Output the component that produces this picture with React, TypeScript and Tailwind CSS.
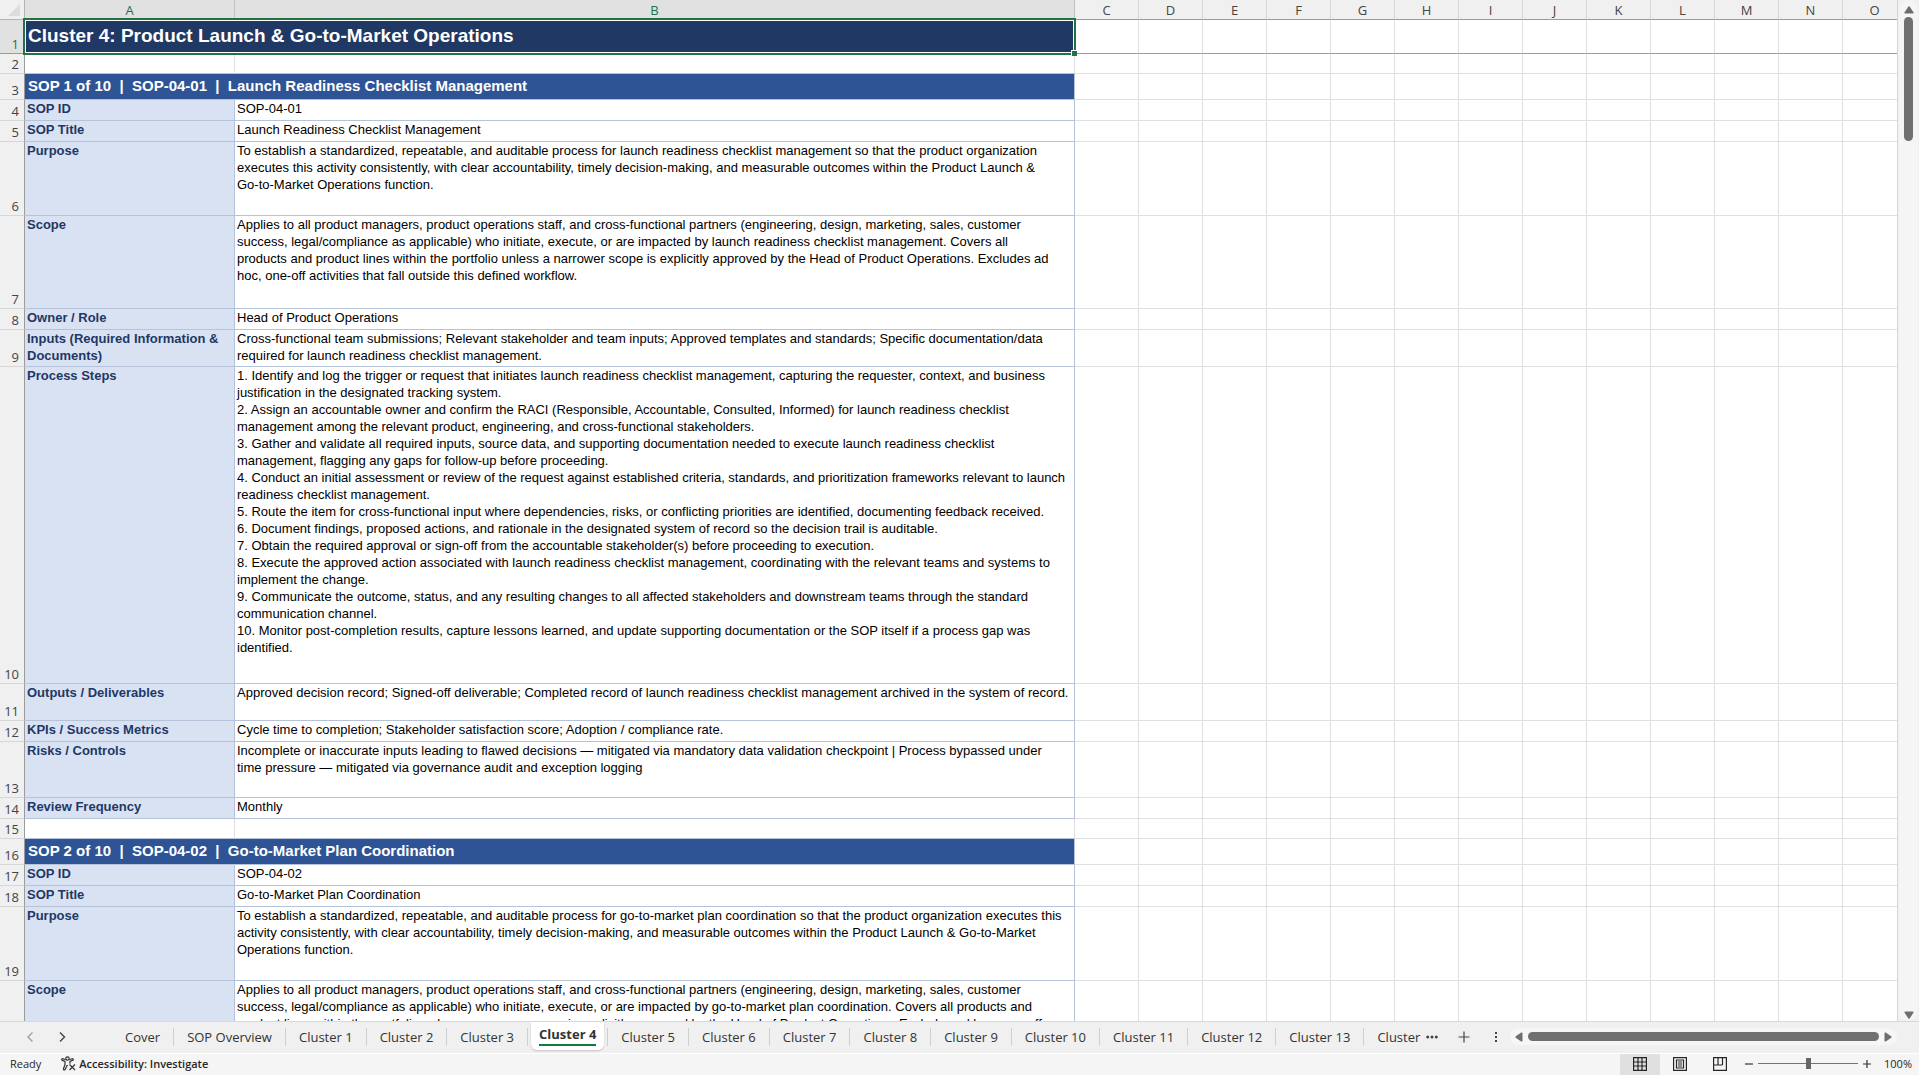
import React, { useState } from 'react';
import clsx from 'clsx';

type Row = { h: string; kind: 'title' | 'blank' | 'section' | 'field'; label?: string; lines?: string[] };

const rows: Row[] = [
  { h: 'h-[34px]', kind: 'title', label: 'Cluster 4: Product Launch & Go-to-Market Operations' },
  { h: 'h-5', kind: 'blank' },
  { h: 'h-[26px]', kind: 'section', label: 'SOP 1 of 10  |  SOP-04-01  |  Launch Readiness Checklist Management' },
  { h: 'h-[21px]', kind: 'field', label: 'SOP ID', lines: ['SOP-04-01'] },
  { h: 'h-[21px]', kind: 'field', label: 'SOP Title', lines: ['Launch Readiness Checklist Management'] },
  {
    h: 'h-[74px]',
    kind: 'field',
    label: 'Purpose',
    lines: [
      'To establish a standardized, repeatable, and auditable process for launch readiness checklist management so that the product organization',
      'executes this activity consistently, with clear accountability, timely decision-making, and measurable outcomes within the Product Launch &',
      'Go-to-Market Operations function.',
    ],
  },
  {
    h: 'h-[93px]',
    kind: 'field',
    label: 'Scope',
    lines: [
      'Applies to all product managers, product operations staff, and cross-functional partners (engineering, design, marketing, sales, customer',
      'success, legal/compliance as applicable) who initiate, execute, or are impacted by launch readiness checklist management. Covers all',
      'products and product lines within the portfolio unless a narrower scope is explicitly approved by the Head of Product Operations. Excludes ad',
      'hoc, one-off activities that fall outside this defined workflow.',
    ],
  },
  { h: 'h-[21px]', kind: 'field', label: 'Owner / Role', lines: ['Head of Product Operations'] },
  {
    h: 'h-[37px]',
    kind: 'field',
    label: 'Inputs (Required Information &\nDocuments)',
    lines: [
      'Cross-functional team submissions; Relevant stakeholder and team inputs; Approved templates and standards; Specific documentation/data',
      'required for launch readiness checklist management.',
    ],
  },
  {
    h: 'h-[317px]',
    kind: 'field',
    label: 'Process Steps',
    lines: [
      '1. Identify and log the trigger or request that initiates launch readiness checklist management, capturing the requester, context, and business',
      'justification in the designated tracking system.',
      '2. Assign an accountable owner and confirm the RACI (Responsible, Accountable, Consulted, Informed) for launch readiness checklist',
      'management among the relevant product, engineering, and cross-functional stakeholders.',
      '3. Gather and validate all required inputs, source data, and supporting documentation needed to execute launch readiness checklist',
      'management, flagging any gaps for follow-up before proceeding.',
      '4. Conduct an initial assessment or review of the request against established criteria, standards, and prioritization frameworks relevant to launch',
      'readiness checklist management.',
      '5. Route the item for cross-functional input where dependencies, risks, or conflicting priorities are identified, documenting feedback received.',
      '6. Document findings, proposed actions, and rationale in the designated system of record so the decision trail is auditable.',
      '7. Obtain the required approval or sign-off from the accountable stakeholder(s) before proceeding to execution.',
      '8. Execute the approved action associated with launch readiness checklist management, coordinating with the relevant teams and systems to',
      'implement the change.',
      '9. Communicate the outcome, status, and any resulting changes to all affected stakeholders and downstream teams through the standard',
      'communication channel.',
      '10. Monitor post-completion results, capture lessons learned, and update supporting documentation or the SOP itself if a process gap was',
      'identified.',
    ],
  },
  {
    h: 'h-[37px]',
    kind: 'field',
    label: 'Outputs / Deliverables',
    lines: ['Approved decision record; Signed-off deliverable; Completed record of launch readiness checklist management archived in the system of record.'],
  },
  {
    h: 'h-[21px]',
    kind: 'field',
    label: 'KPIs / Success Metrics',
    lines: ['Cycle time to completion; Stakeholder satisfaction score; Adoption / compliance rate.'],
  },
  {
    h: 'h-[56px]',
    kind: 'field',
    label: 'Risks / Controls',
    lines: [
      'Incomplete or inaccurate inputs leading to flawed decisions — mitigated via mandatory data validation checkpoint | Process bypassed under',
      'time pressure — mitigated via governance audit and exception logging',
    ],
  },
  { h: 'h-[21px]', kind: 'field', label: 'Review Frequency', lines: ['Monthly'] },
  { h: 'h-5', kind: 'blank' },
  { h: 'h-[26px]', kind: 'section', label: 'SOP 2 of 10  |  SOP-04-02  |  Go-to-Market Plan Coordination' },
  { h: 'h-[21px]', kind: 'field', label: 'SOP ID', lines: ['SOP-04-02'] },
  { h: 'h-[21px]', kind: 'field', label: 'SOP Title', lines: ['Go-to-Market Plan Coordination'] },
  {
    h: 'h-[74px]',
    kind: 'field',
    label: 'Purpose',
    lines: [
      'To establish a standardized, repeatable, and auditable process for go-to-market plan coordination so that the product organization executes this',
      'activity consistently, with clear accountability, timely decision-making, and measurable outcomes within the Product Launch & Go-to-Market',
      'Operations function.',
    ],
  },
  {
    h: 'h-[60px]',
    kind: 'field',
    label: 'Scope',
    lines: [
      'Applies to all product managers, product operations staff, and cross-functional partners (engineering, design, marketing, sales, customer',
      'success, legal/compliance as applicable) who initiate, execute, or are impacted by go-to-market plan coordination. Covers all products and',
      'product lines within the portfolio unless a narrower scope is explicitly approved by the Head of Product Operations. Excludes ad hoc, one-off',
    ],
  },
];

const emptyCols = 'CDEFGHIJKLMNO'.split('');

const tabs = [
  'Cover', 'SOP Overview', 'Cluster 1', 'Cluster 2', 'Cluster 3', 'Cluster 4', 'Cluster 5', 'Cluster 6',
  'Cluster 7', 'Cluster 8', 'Cluster 9', 'Cluster 10', 'Cluster 11', 'Cluster 12', 'Cluster 13', 'Cluster',
];

const SheetRow = ({ row, index }: { row: Row; index: number }) => {
  const first = index === 0;
  const last = index === rows.length - 1;
  const beforeSection = rows[index + 1]?.kind === 'section';
  const blankBorder = beforeSection ? 'border-b-[#b4c3da]' : 'border-b-[#e0e0e0]';
  return (
    <tr className={row.h}>
      <th
        scope="row"
        className={clsx(
          'border-r border-b border-r-[#9b9b9b] p-0 pr-[5px] text-right align-bottom font-["Open_Sans",sans-serif] text-[13px] leading-[17px] font-normal',
          first ? 'border-b-[#9b9b9b] bg-[#e1e1e1] text-[#217346]' : 'border-b-[#d6d6d6] bg-[#f0f0f0] text-[#444444]'
        )}
      >
        {last ? '' : index + 1}
      </th>
      {row.kind === 'title' && (
        <td
          colSpan={2}
          className="relative border-b border-[#9b9b9b] bg-[#203864] p-0 pb-0.5 pl-[3px] align-middle text-[19px] leading-6 font-bold text-white"
        >
          {row.label}
          {/* Selection frame */}
          <span className="pointer-events-none absolute -top-0.5 -right-px -bottom-0.5 -left-0.5 border-2 border-[#217346]" />
          <span className="pointer-events-none absolute top-0 right-px bottom-0 left-0 border border-white" />
          <span className="absolute -right-0.5 -bottom-[3px] size-1.5 border-t border-l border-white bg-[#217346]" />
        </td>
      )}
      {row.kind === 'section' && (
        <td
          colSpan={2}
          className="border-r border-b border-[#b4c3da] bg-[#2f5496] p-0 pb-0.5 pl-[3px] align-middle text-[15px] leading-5 font-bold whitespace-pre text-white"
        >
          {row.label}
        </td>
      )}
      {row.kind === 'blank' && (
        <>
          <td className={clsx('border-r border-b border-r-[#e0e0e0] p-0', blankBorder)} />
          <td className={clsx('border-r border-b border-r-[#e0e0e0] p-0', blankBorder)} />
        </>
      )}
      {row.kind === 'field' && (
        <>
          <td className="border-r border-b border-[#b4c3da] bg-[#d9e2f3] p-0 pl-0.5 align-top text-[13px] leading-[17px] font-bold whitespace-pre text-[#1f3864]">
            {row.label}
          </td>
          <td className="border-r border-b border-[#b4c3da] p-0 pl-0.5 align-top text-[13px] leading-[17px] whitespace-pre text-black">
            {row.lines?.join('\n')}
          </td>
        </>
      )}
      {emptyCols.map((c) => (
        <td
          key={c}
          className={clsx('border-r border-b border-r-[#e0e0e0] p-0', first ? 'border-b-[#9b9b9b]' : 'border-b-[#e0e0e0]')}
        />
      ))}
    </tr>
  );
};

const Sheet = () => (
  <div className="min-w-0 flex-1 overflow-hidden border-r border-[#d6d6d6] bg-white">
    <table className='w-max table-fixed border-separate border-spacing-0 font-["Liberation_Sans",Arial,sans-serif]'>
      <colgroup>
        <col className="w-[25px]" />
        <col className="w-[210px]" />
        <col className="w-[840px]" />
        {emptyCols.map((c) => (
          <col key={c} className="w-16" />
        ))}
      </colgroup>
      <thead>
        <tr className='h-5 font-["Open_Sans",sans-serif] text-[13px] leading-[17px]'>
          <th className="border-r border-b border-[#b5b5b5] bg-[#f0f0f0] p-0">
            <svg viewBox="0 0 12 12" className="ml-2 size-3" aria-hidden="true">
              <path d="M12 0v12H0z" fill="#dcdcdc" />
            </svg>
          </th>
          {['A', 'B'].map((c) => (
            <th
              key={c}
              scope="col"
              className="border-r border-b border-r-[#c0c0c0] border-b-[#9b9b9b] bg-[#e1e1e1] p-0 pt-0.5 font-normal text-[#217346]"
            >
              {c}
            </th>
          ))}
          {emptyCols.map((c) => (
            <th
              key={c}
              scope="col"
              className="border-r border-b border-r-[#d6d6d6] border-b-[#9b9b9b] bg-[#f0f0f0] p-0 pt-0.5 font-normal text-[#444444]"
            >
              {c}
            </th>
          ))}
        </tr>
      </thead>
      <tbody>
        {rows.map((row, i) => (
          <SheetRow key={i} row={row} index={i} />
        ))}
      </tbody>
    </table>
  </div>
);

const Arrow = ({ rotate = '' }: { rotate?: string }) => (
  <svg viewBox="0 0 10 10" className={clsx('size-2.5 shrink-0', rotate)} fill="#6e6e6e" aria-hidden="true">
    <path d="M4.200 1.800q.8-1 1.600 0L9.400 7.200q.6 1.300-.8 1.300H1.400Q0 8.500.6 7.200z" />
  </svg>
);

const VerticalScroll = () => (
  <div className="flex w-[21px] shrink-0 flex-col items-center rounded-full border-x border-[#f0f0f0] bg-[#f5f5f5] pt-[3px]">
    <button aria-label="Scroll up" className="h-3.5">
      <Arrow />
    </button>
    <div className="flex w-full flex-1 justify-center">
      <div className="h-1/8 w-[9px] rounded-full bg-[#707070]" />
    </div>
    <button aria-label="Scroll down" className="h-3">
      <Arrow rotate="rotate-180" />
    </button>
  </div>
);

const HorizontalScroll = () => (
  <div className="mr-[22px] ml-3 flex h-[17px] min-w-0 flex-1 items-center gap-1 rounded-full bg-[#f6f6f6] px-1">
    <button aria-label="Scroll left">
      <Arrow rotate="-rotate-90" />
    </button>
    <div className="h-[9px] flex-1 rounded-full bg-[#707070]" />
    <button aria-label="Scroll right">
      <Arrow rotate="rotate-90" />
    </button>
  </div>
);

const TabBar = () => {
  const [active, setActive] = useState('Cluster 4');
  return (
    <nav
      aria-label="Sheets"
      className='flex h-8 shrink-0 items-center border-t border-[#d9d9d9] bg-[#f0f0f0] pb-0.5 font-["Open_Sans",sans-serif] text-[13px] text-[#333333]'
    >
      <button aria-label="Previous sheet" className="ml-6 w-3">
        <svg viewBox="0 0 12 12" className="size-3" fill="none" stroke="#a0a0a0" strokeWidth="1.4">
          <path d="M8.500 1.500 4 6l4.500 4.500" />
        </svg>
      </button>
      <button aria-label="Next sheet" className="ml-5 w-3">
        <svg viewBox="0 0 12 12" className="size-3" fill="none" stroke="#444444" strokeWidth="1.4">
          <path d="M4 1.500 8.500 6 4 10.500" />
        </svg>
      </button>
      <div className="ml-11 flex h-full shrink-0 items-center">
        {tabs.map((t) =>
          t === active ? (
            <div key={t} className="flex h-full items-center">
              <button className="mx-[3px] h-7 self-start rounded-b-md bg-white px-2 pb-0.5 font-bold shadow-[0_1px_2px_#c4c4c4]">
                <span className="block border-b-2 border-[#107c41] leading-[19px]">{t}</span>
              </button>
              <span className="h-[18px] w-px bg-[#cfcfcf]" />
            </div>
          ) : (
            <button
              key={t}
              onClick={() => setActive(t)}
              className={clsx('pl-[13px] leading-[18px]', t === 'Cluster' ? 'pr-1.5' : 'border-r border-[#cfcfcf] pr-[13px]')}
            >
              {t}
            </button>
          )
        )}
      </div>
      <button aria-label="More sheets" className="w-3">
        <svg viewBox="0 0 12 4" className="h-1 w-3" fill="#444444">
          <circle cx="1.700" cy="2" r="1.500" />
          <circle cx="6" cy="2" r="1.500" />
          <circle cx="10.300" cy="2" r="1.500" />
        </svg>
      </button>
      <button aria-label="New sheet" className="ml-5 w-3">
        <svg viewBox="0 0 12 12" className="size-3" stroke="#444444" strokeWidth="1.200">
          <path d="M6 .5v11M.5 6h11" />
        </svg>
      </button>
      <button aria-label="Resize tabs" className="ml-6 w-1">
        <svg viewBox="0 0 4 12" className="h-3 w-1" fill="#444444">
          <path d="M1 1h2v2H1zM1 5h2v2H1zM1 9h2v2H1z" />
        </svg>
      </button>
      <HorizontalScroll />
    </nav>
  );
};

const viewIcons = [
  { name: 'Normal', d: 'M.6.6h12.800v12.800H.6zM5 .6v12.800M9 .6v12.800M.6 5h12.800M.6 9h12.800' },
  { name: 'Page Layout', d: 'M.6.6h12.800v12.800H.6zM3.500 3h7v8h-7zM5 5h4M5 7h4M5 9h4' },
  { name: 'Page Break Preview', d: 'M.6.6h12.800v12.800H.6zM5 .6v7.400M9.500 .6v7.400M.6 8h8.900' },
];

const StatusBar = () => {
  const [zoom, setZoom] = useState(100);
  return (
    <footer className='flex h-[22px] shrink-0 items-center border-t border-white bg-[#f5f5f5] pr-[7px] pb-0.5 pl-2.5 font-["Open_Sans",sans-serif] text-[11px] leading-4 text-[#262626]'>
      <span>Ready</span>
      <button className="ml-5 flex items-center gap-[3px] font-semibold">
        <svg viewBox="0 0 15 15" className="size-[15px]" fill="none" stroke="#333333" strokeWidth="1.200" aria-hidden="true">
          <circle cx="6.500" cy="2.500" r="1.700" />
          <path d="M4.600 3.700 2 2.700c-1.300-.4-1.700 1.300-.6 1.700L4 5.500v3L2.500 12.700c-.4 1.300 1.100 1.700 1.600.7L6 9.500h1M8.400 3.700 11 2.700c1.300-.4 1.700 1.300.6 1.700L9 5.500v2.200" />
          <path d="m8.500 8.500 5.500 5.500M14 8.500 8.500 14" />
        </svg>
        Accessibility: Investigate
      </button>
      <div className="ml-auto flex self-stretch">
        {viewIcons.map((v, i) => (
          <button
            key={v.name}
            aria-label={v.name}
            className={clsx('-mb-0.5 flex w-10 items-center justify-center pb-0.5', i === 0 && 'bg-[#e0e0e0]')}
          >
            <svg viewBox="0 0 14 14" className="size-3.5" fill="none" stroke="#262626" strokeWidth="1.200">
              <path d={v.d} />
            </svg>
          </button>
        ))}
      </div>
      <button aria-label="Zoom out" onClick={() => setZoom(zoom - 10)} className="ml-1 w-2.5">
        <svg viewBox="0 0 10 10" className="size-2.5" stroke="#333333" strokeWidth="1.200">
          <path d="M1 5h8" />
        </svg>
      </button>
      <input
        type="range"
        aria-label="Zoom"
        min={10}
        max={190}
        value={zoom}
        onChange={(e) => setZoom(Number(e.target.value))}
        className="mx-1 h-[11px] w-[100px] appearance-none bg-[linear-gradient(#737373,#737373)] bg-[length:100%_1px] bg-center bg-no-repeat [&::-webkit-slider-thumb]:h-[11px] [&::-webkit-slider-thumb]:w-[5px] [&::-webkit-slider-thumb]:appearance-none [&::-webkit-slider-thumb]:bg-[#666666]"
      />
      <button aria-label="Zoom in" onClick={() => setZoom(zoom + 10)} className="w-2.5">
        <svg viewBox="0 0 10 10" className="size-2.5" stroke="#333333" strokeWidth="1.200">
          <path d="M1 5h8M5 1v8" />
        </svg>
      </button>
      <span className="ml-3">{zoom}%</span>
    </footer>
  );
};

const App = () => (
  <div className="flex h-screen flex-col overflow-hidden bg-[#f0f0f0]">
    <main className="flex min-h-0 flex-1">
      <Sheet />
      <VerticalScroll />
    </main>
    <TabBar />
    <StatusBar />
  </div>
);

export default App;
